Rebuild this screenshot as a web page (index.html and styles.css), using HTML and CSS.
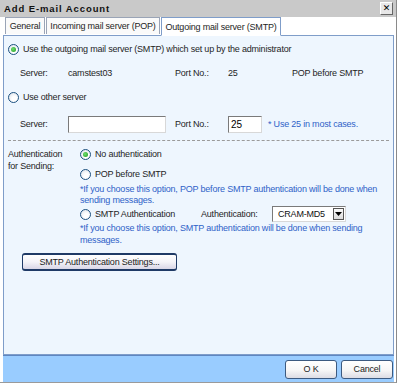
FILE: index.html
```html
<!DOCTYPE html>
<html>
<head>
<meta charset="utf-8">
<link rel="stylesheet" href="styles.css">
</head>
<body>
<div class="window">
  <div class="titlebar">
    <span class="title">Add E-mail Account</span>
    <span class="close">&#x2715;</span>
  </div>
  <div class="tabs">
    <div class="tab t1">General</div>
    <div class="tab t2">Incoming mail server (POP)</div>
    <div class="tab t3 active">Outgoing mail server (SMTP)</div>
  </div>
  <div class="panel">
    <div class="row r1"><span class="radio checked"></span><span>Use the outgoing mail server (SMTP) which set up by the administrator</span></div>
    <div class="row r2 info">
      <span class="c-label">Server:</span>
      <span class="c-val">camstest03</span>
      <span class="c-plabel">Port No.:</span>
      <span class="c-pval">25</span>
      <span>POP before SMTP</span>
    </div>
    <div class="row r3"><span class="radio"></span><span>Use other server</span></div>
    <div class="row r4 info">
      <span class="c-label">Server:</span>
      <span class="c-val"><span class="input wide"></span></span>
      <span class="c-plabel">Port No.:</span>
      <span class="c-pval2"><span class="input port">25</span></span>
      <span class="note">* Use 25 in most cases.</span>
    </div>
    <div class="sep"></div>
    <div class="auth">
      <div class="auth-label">Authentication<br>for Sending:</div>
      <div class="auth-opts">
        <div class="row arow"><span class="radio checked"></span><span>No authentication</span></div>
        <div class="row arow"><span class="radio"></span><span>POP before SMTP</span></div>
        <div class="note block n1">*If you choose this option, POP before SMTP authentication will be done when sending messages.</div>
        <div class="row arow smtp">
          <span class="radio"></span><span class="smtp-text">SMTP Authentication</span>
          <span class="auth-k">Authentication:</span>
          <span class="select"><span class="sel-val">CRAM-MD5</span><span class="sel-btn"><svg width="7" height="4" viewBox="0 0 7 4"><path d="M0 0h7L3.5 4z" fill="#000"/></svg></span></span>
        </div>
        <div class="note block n2">*If you choose this option, SMTP authentication will be done when sending messages.</div>
      </div>
    </div>
    <div class="btnrow"><span class="btn big">SMTP Authentication Settings...</span></div>
  </div>
  <div class="footer">
    <span class="btn fbtn">O K</span>
    <span class="btn fbtn">Cancel</span>
  </div>
</div>
</body>
</html>
```
FILE: styles.css
```css
html, body {
  margin: 0;
  padding: 0;
  background: #ffffff;
}
body {
  width: 400px;
  height: 384px;
  overflow: hidden;
  font-family: "Liberation Sans", Arial, sans-serif;
  font-size: 9px;
  letter-spacing: -0.2px;
  color: #1e1e1e;
}
.window {
  width: 396px;
  height: 382px;
  border-right: 1px solid #8a8a8a;
  border-bottom: 1px solid #9a9a9a;
  display: flex;
  flex-direction: column;
  background: #fff;
}
.titlebar {
  height: 17px;
  background: #c9c9c9;
  display: flex;
  align-items: center;
  justify-content: space-between;
  padding: 0 3px 0 4px;
}
.title {
  font-weight: bold;
  font-size: 9.5px;
  letter-spacing: 0.9px;
  color: #111;
}
.close {
  width: 11px;
  height: 11px;
  border: 1px solid #fff;
  border-right-color: #666;
  border-bottom-color: #666;
  background: #e8e8e8;
  font-size: 9px;
  font-weight: bold;
  line-height: 11px;
  text-align: center;
  color: #000;
  letter-spacing: 0;
  font-family: "DejaVu Sans", sans-serif;
}
.tabs {
  height: 18px;
  display: flex;
  align-items: flex-end;
  padding-left: 5px;
  position: relative;
  z-index: 1;
}
.tab {
  height: 17px;
  border: 1px solid #9aa4b6;
  border-bottom: none;
  background: #fafafa;
  display: flex;
  align-items: center;
  justify-content: center;
  box-sizing: border-box;
  margin-right: 1px;
  margin-bottom: 1px;
  white-space: nowrap;
  flex: none;
}
.t1 { width: 40px; }
.t2 { width: 114px; }
.t3 { width: 120px; }
.tab.active {
  height: 19px;
  margin-bottom: -1px;
  background: #fff;
  border-color: #7f9dc9;
  border-bottom: 1px solid #fff;
}
.panel {
  margin-left: 3px;
  width: 391px;
  height: 320px;
  box-sizing: border-box;
  border: 1px solid #7f9dc9;
  background: #eef6fe;
  padding-top: 3px;
}
.row {
  display: flex;
  align-items: center;
  height: 20px;
  white-space: nowrap;
}
.r1, .r3 { padding-left: 4px; }
.r2, .r3 { margin-top: 4px; }
.r4 { margin-top: 7px; }
.radio {
  width: 11px;
  height: 11px;
  box-sizing: border-box;
  border-radius: 50%;
  border: 1px solid #1c5180;
  background: radial-gradient(circle at 60% 65%, #ffffff 30%, #d6dde6 100%);
  margin-right: 4px;
  display: flex;
  align-items: center;
  justify-content: center;
  flex: none;
}
.radio.checked::after {
  content: "";
  width: 5px;
  height: 5px;
  border-radius: 50%;
  background: radial-gradient(circle at 40% 40%, #6fde6f, #1e9a1e);
}
.info { padding-left: 16px; }
.c-label { width: 48px; }
.c-val { width: 107px; display: flex; align-items: center; }
.c-plabel { width: 53px; }
.c-pval { width: 64px; }
.c-pval2 { width: 40px; display: flex; align-items: center; }
.input {
  display: block;
  height: 17px;
  box-sizing: border-box;
  background: #fff;
  border: 1px solid #d8d8d8;
  border-top-color: #7a7a7a;
  border-left-color: #7a7a7a;
  line-height: 15px;
  padding-left: 2px;
  font-size: 10px;
  letter-spacing: 0;
  color: #000;
}
.input.wide { width: 98px; }
.input.port { width: 34px; }
.note {
  color: #2f62c8;
}
.sep {
  margin: 6px 4px 0 4px;
  border-top: 1px dashed #9a9a9a;
}
.auth {
  display: flex;
  padding-left: 4px;
  margin-top: 3px;
}
.auth-label {
  width: 72px;
  line-height: 12px;
  padding-top: 4px;
}
.arow { height: 20px; }
.block {
  line-height: 11px;
  width: 306px;
}
.n1 { margin-bottom: -1px; }
.n2 { line-height: 12px; margin-top: -1px; }
.smtp { height: 18px; }
.smtp-text { width: 106px; }
.auth-k { width: 71px; }
.select {
  width: 74px;
  height: 16px;
  box-sizing: border-box;
  background: #fff;
  border: 1px solid #d8d8d8;
  border-top-color: #7a7a7a;
  border-left-color: #7a7a7a;
  display: flex;
  align-items: center;
  justify-content: space-between;
  padding-left: 5px;
  padding-right: 1px;
  color: #111;
}
.sel-btn {
  width: 11px;
  height: 12px;
  box-sizing: border-box;
  border: 1px solid #555;
  background: linear-gradient(#fafafa, #dcdcdc);
  display: flex;
  align-items: center;
  justify-content: center;
}
.btnrow {
  padding-left: 18px;
  margin-top: 7px;
}
.btn {
  display: inline-flex;
  align-items: center;
  justify-content: center;
  box-sizing: border-box;
  border: 1px solid #1f3a66;
  border-radius: 3px;
  background: linear-gradient(#ffffff 0%, #f4f3f8 50%, #d9d6e6 100%);
  color: #222;
}
.big {
  width: 155px;
  height: 18px;
  border-width: 2px 1px;
}
.footer {
  height: 27px;
  margin-left: 3px;
  width: 391px;
  background: #99ccff;
  border-top: 1px solid #5f86c0;
  box-sizing: border-box;
  display: flex;
  justify-content: flex-end;
  align-items: center;
  gap: 4px;
  padding-right: 1px;
}
.fbtn {
  width: 52px;
  height: 19px;
  border-color: #3c5a80;
  background: linear-gradient(#ffffff 0%, #f6f6f6 55%, #dcdce4 100%);
}
```
